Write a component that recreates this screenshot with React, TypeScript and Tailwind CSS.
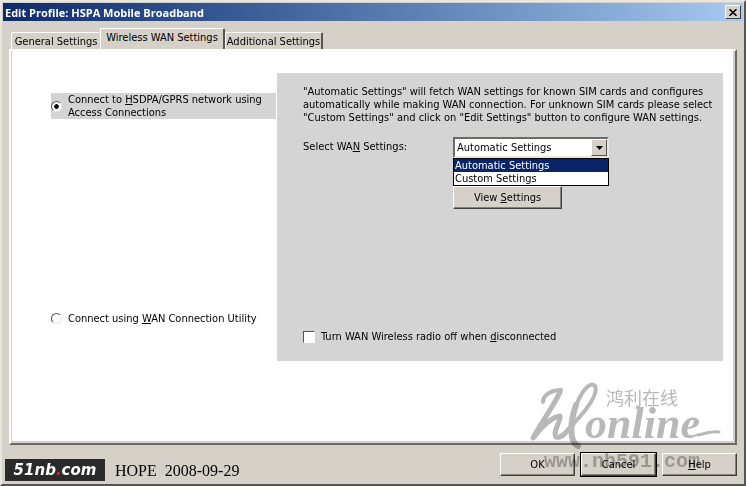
import { useState } from 'react';
import type { ReactNode } from 'react';
import { clsx } from 'clsx';

const TABS = ['General Settings', 'Wireless WAN Settings', 'Additional Settings'];
const WAN_OPTIONS = ['Automatic Settings', 'Custom Settings'];

function Key({ children }: { children: ReactNode }) {
  return <span className="underline underline-offset-1">{children}</span>;
}

function PushButton({ children, isDefault, className }: { children: ReactNode; isDefault?: boolean; className?: string }) {
  return (
    <button
      type="button"
      className={clsx(
        'h-[23px] border border-t-white border-l-white border-r-[#404040] border-b-[#404040] bg-[#d5d1c9] text-center shadow-[inset_-1px_-1px_0_#85827a]',
        isDefault && 'outline outline-1 outline-black',
        className
      )}
    >
      {children}
    </button>
  );
}

function TitleBar() {
  return (
    <header className="flex h-[18px] items-center justify-between bg-linear-to-r from-[#0e2a6c] to-[#a6caf0] pr-0.5 pl-0.5">
      <h1 className="font-['Open_Sans',sans-serif] text-[11px] font-bold text-white">Edit Profile: HSPA Mobile Broadband</h1>
      <button
        type="button"
        aria-label="Close"
        className="flex h-3.5 w-4 items-center justify-center border border-t-white border-l-white border-r-[#404040] border-b-[#404040] bg-[#d5d1c9]"
      >
        <svg viewBox="0 0 8 7" className="h-[7px] w-2" stroke="black" strokeWidth="1.6">
          <path d="M0.5 0.2 7.5 6.8M7.5 0.2 0.5 6.8" />
        </svg>
      </button>
    </header>
  );
}

function Watermark() {
  return (
    <div aria-hidden="true" className="pointer-events-none absolute right-5 bottom-[14px] h-[108px] w-[200px] text-[#b8b8b8] mix-blend-multiply">
      <svg viewBox="0 0 200 108" className="absolute inset-0 h-full w-full" fill="none" stroke="currentColor" strokeLinecap="round" strokeLinejoin="round">
        <path d="M19 40C19 32 29 28 37 28" strokeWidth="4" />
        <path d="M36 30C32 40 19 58 9 76" strokeWidth="5" />
        <path d="M10 75C19 63 29 55 36 54C38 57 28 70 32 75C37 77 43 70 49 62" strokeWidth="5" />
        <path d="M49 62C61 50 75 32 71 24C66 18 56 31 51 47" strokeWidth="4" />
        <path d="M52 43C46 60 45 80 54 84" strokeWidth="6" />
        <path d="M174 73C180 72 188 69 195 70" strokeWidth="3" />
      </svg>
      <span className="absolute top-[25px] left-[82px] font-['Noto_Sans_CJK_SC',sans-serif] text-[18px] leading-5">鸿利在线</span>
      <span className="absolute top-[42px] left-[61px] font-['Liberation_Serif',serif] text-[44px] leading-10 font-bold italic">online</span>
      <span className="absolute top-[90px] left-[20px] font-['Liberation_Mono',monospace] text-[20px] leading-5 font-bold">www.nb591.com</span>
    </div>
  );
}

export default function App() {
  const [tab, setTab] = useState(1);
  const [mode, setMode] = useState('hsdpa');
  const [wan, setWan] = useState(WAN_OPTIONS[0]);
  const [radioOff, setRadioOff] = useState(false);

  return (
    <main className="relative flex min-h-screen flex-col border-2 border-t-[#e8e6e0] border-l-[#e8e6e0] border-r-[#55544f] border-b-[#55544f] bg-[#d5d1c9] p-px font-['DejaVu_Sans_Condensed','DejaVu_Sans',sans-serif] text-[11px] leading-[13px] text-black">
      <TitleBar />

      <nav role="tablist" className="mt-2 flex h-5 items-end pl-2">
        {TABS.map((name, i) => (
          <button
            key={name}
            type="button"
            role="tab"
            aria-selected={tab === i}
            onClick={() => setTab(i)}
            className={clsx(
              'rounded-t-xs border-t border-l border-white bg-[#d5d1c9] whitespace-nowrap',
              tab === i ? 'z-10 h-[21px] w-[125px] border-r-2 border-r-[#55544f] pb-1' : 'h-[17px]',
              i === 0 && 'w-[89px]',
              i === 2 && 'w-[98px] border-r-2 border-r-[#55544f]'
            )}
          >
            {name}
          </button>
        ))}
      </nav>

      <section className="mx-1.5 flex flex-1 flex-col border-2 border-t-white border-l-white border-r-[#6b6a65] border-b-[#6b6a65]">
        <div className="flex flex-1 items-start border-r-2 border-b-2 border-l border-[#d5d1c9] bg-white pt-[22px] pr-2.5 pb-20 pl-[39px]">
          <fieldset className="flex w-[226px] shrink-0 flex-col gap-[193px] pt-5">
            <label className="mr-px flex items-center bg-[#d4d4d4]">
              <RadioDot checked={mode === 'hsdpa'} onChange={() => setMode('hsdpa')} name="hsdpa" />
              <span>
                Connect to <Key>H</Key>SDPA/GPRS network using
                <br />
                Access Connections
              </span>
            </label>
            <label className="flex items-center">
              <RadioDot checked={mode === 'utility'} onChange={() => setMode('utility')} name="utility" />
              <span>
                Connect using <Key>W</Key>AN Connection Utility
              </span>
            </label>
          </fieldset>

          <div className="flex h-72 min-w-0 flex-1 flex-col bg-[#d4d4d4] pt-3 pl-[26px]">
            <p className="whitespace-nowrap">
              "Automatic Settings" will fetch WAN settings for known SIM cards and configures
              <br />
              automatically while making WAN connection. For unknown SIM cards please select
              <br />
              "Custom Settings" and click on "Edit Settings" button to configure WAN settings.
            </p>

            <div className="mt-[13px] flex items-start">
              <label htmlFor="wan" className="w-[150px] pt-[3px]">
                Select WA<Key>N</Key> Settings:
              </label>
              <div className="w-[156px]">
                <div className="relative">
                  <select
                    id="wan"
                    value={wan}
                    onChange={e => setWan(e.target.value)}
                    className="block h-[21px] w-full appearance-none border-2 border-t-[#6b6a65] border-l-[#6b6a65] border-r-[#e8e6e0] border-b-[#e8e6e0] bg-white pl-0.5"
                  >
                    {WAN_OPTIONS.map(o => <option key={o}>{o}</option>)}
                  </select>
                  <span className="pointer-events-none absolute top-0.5 right-0.5 flex h-[17px] w-4 items-center justify-center border border-t-white border-l-white border-r-[#55544f] border-b-[#55544f] bg-[#d5d1c9]">
                    <svg viewBox="0 0 7 4" className="h-1 w-[7px]"><path d="M0 0H7L3.5 4Z" /></svg>
                  </span>
                </div>
                <ul role="listbox" aria-label="WAN settings" className="border border-black bg-white">
                  {WAN_OPTIONS.map(o => (
                    <li
                      key={o}
                      role="option"
                      aria-selected={wan === o}
                      onClick={() => setWan(o)}
                      className={clsx('pl-px', wan === o && 'bg-[#0a246a] text-white')}
                    >
                      {o}
                    </li>
                  ))}
                </ul>
                <PushButton className="w-[109px]">View <Key>S</Key>ettings</PushButton>
              </div>
            </div>

            <label className="mt-auto mb-[18px] flex items-center gap-1.5">
              <input
                type="checkbox"
                checked={radioOff}
                onChange={e => setRadioOff(e.target.checked)}
                className="h-3 w-3 appearance-none border border-t-[#55544f] border-l-[#55544f] border-r-white border-b-white bg-white checked:bg-black"
              />
              <span>Turn WAN Wireless radio off when <Key>d</Key>isconnected</span>
            </label>
          </div>
        </div>
      </section>

      <footer className="flex h-[38px] items-center justify-between pr-1.5 pl-0.5">
        <div className="flex items-center gap-2.5 self-end pb-0.5">
          <div className="flex h-[22px] w-[100px] items-center justify-center bg-[#2b2a2b] font-['DejaVu_Sans',sans-serif] text-[15px] font-bold text-white italic">
            51nb<span className="text-[#c8252c]">.</span>com
          </div>
          <span className="font-['Liberation_Serif',serif] text-[16px] whitespace-pre">HOPE  2008-09-29</span>
        </div>
        <div className="flex gap-1.5">
          <PushButton className="w-[75px]">OK</PushButton>
          <PushButton isDefault className="w-[75px]">Cancel</PushButton>
          <PushButton className="w-[75px]"><Key>H</Key>elp</PushButton>
        </div>
      </footer>

      <Watermark />
    </main>
  );
}

function RadioDot({ checked, onChange, name }: { checked: boolean; onChange: () => void; name: string }) {
  return (
    <input
      type="radio"
      name="connection"
      value={name}
      checked={checked}
      onChange={onChange}
      className="mr-1.5 h-[11px] w-[11px] shrink-0 appearance-none rounded-full border border-t-[#55544f] border-l-[#55544f] border-r-[#e8e6e0] border-b-[#e8e6e0] bg-white checked:bg-radial checked:from-black checked:from-30% checked:to-white checked:to-40%"
    />
  );
}
